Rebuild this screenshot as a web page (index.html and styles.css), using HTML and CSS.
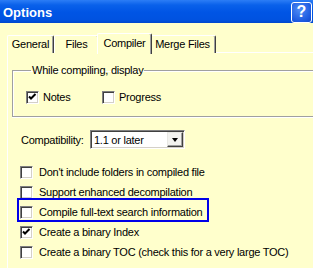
FILE: index.html
```html
<!DOCTYPE html>
<html lang="en">
<head>
    <meta charset="UTF-8">
    <title>Options</title>
    <link rel="stylesheet" href="styles.css">
</head>
<body>
    <div class="titlebar">
        <span class="title">Options</span>
        <span class="help">?</span>
    </div>
    <div class="dialog">
        <div class="tabs">
            <div class="tab tab-general">General</div>
            <div class="tab tab-files">Files</div>
            <div class="tab tab-compiler active">Compiler</div>
            <div class="tab tab-merge">Merge Files</div>
        </div>
        <div class="panel">
            <fieldset class="group">
                <legend>While compiling, display</legend>
                <div class="group-row">
                    <label class="check notes"><span class="box"><svg width="9" height="9" viewBox="0 0 9 9"><path d="M1 3.5 L3 5.5 L7.5 1" fill="none" stroke="#000" stroke-width="2"/></svg></span>Notes</label>
                    <label class="check"><span class="box"></span>Progress</label>
                </div>
            </fieldset>
            <div class="compat">
                <span class="compat-label">Compatibility:</span>
                <div class="combo">
                    <span class="combo-value">1.1 or later</span>
                    <span class="combo-btn"><span class="arrow"></span></span>
                </div>
            </div>
            <div class="options">
                <label class="check row"><span class="box"></span>Don't include folders in compiled file</label>
                <label class="check row"><span class="box"></span>Support enhanced decompilation</label>
                <label class="check row hl"><span class="box"></span>Compile full-text search information</label>
                <label class="check row"><span class="box"><svg width="9" height="9" viewBox="0 0 9 9"><path d="M1 3.5 L3 5.5 L7.5 1" fill="none" stroke="#000" stroke-width="2"/></svg></span>Create a binary Index</label>
                <label class="check row"><span class="box"></span>Create a binary TOC (check this for a very large TOC)</label>
            </div>
        </div>
    </div>
</body>
</html>
```

FILE: styles.css
```css
body {
    margin: 0;
    padding: 0;
    background-color: #ffffcc;
    font-family: "Liberation Sans", Arial, sans-serif;
    font-size: 11px;
    letter-spacing: -0.25px;
    color: #000;
    overflow: hidden;
    height: 268px;
}
.titlebar {
    height: 23px;
    display: flex;
    align-items: center;
    justify-content: space-between;
    padding: 0 1px 0 3px;
    background: linear-gradient(#2c7df6 0, #0a61ea 5px, #0055e5 12px, #0052e0 20px, #0046cc 23px);
}
.title {
    color: #fff;
    font-weight: bold;
    font-size: 13px;
    letter-spacing: 0;
    margin-top: 2px;
}
.help {
    width: 19px;
    height: 19px;
    border: 1px solid #fff;
    border-radius: 3px;
    background: radial-gradient(circle at 40% 35%, #4f8cf5, #1c5ae0 70%, #1249c8);
    color: #fff;
    font-weight: bold;
    font-size: 16px;
    letter-spacing: 0;
    display: flex;
    align-items: center;
    justify-content: center;
    margin-top: 1px;
}
.dialog {
    padding: 9px 0 0 7px;
}
.tabs {
    display: flex;
    align-items: flex-end;
    height: 21px;
    position: relative;
    z-index: 1;
}
.tab {
    height: 18px;
    box-sizing: border-box;
    line-height: 17px;
    text-align: center;
    border-top: 1px solid #fff;
    border-left: 1px solid #fff;
    border-right: 1px solid #404040;
    box-shadow: inset -1px 0 0 #a0a0a0;
    border-top-left-radius: 2px;
    border-top-right-radius: 2px;
    background-color: #ffffcc;
}
.tab-general { width: 47px; }
.tab-files { width: 45px; }
.tab-compiler { width: 55px; }
.tab-merge { width: 66px; }
.tab.active {
    height: 21px;
    line-height: 18px;
    margin: 0 -2px -1px -2px;
    position: relative;
    z-index: 2;
}
.tab-merge {
    border-left: none;
}
.panel {
    width: 306px;
    height: 216px;
    border-top: 1px solid #fff;
    border-left: 1px solid #fff;
    box-sizing: border-box;
    margin-top: -1px;
}
.group {
    margin: 11px 0 0 4px;
    padding: 13px 0 12px 13px;
    border: 1px solid #a0a0a0;
    border-right: none;
    box-shadow: inset 1px 1px 0 #fff, 0 1px 0 #fff;
}
.group legend {
    padding: 0 1px;
    margin-left: 5px;
    line-height: 13px;
}
.group-row {
    display: flex;
}
.check {
    display: flex;
    align-items: center;
    gap: 4px;
    height: 14px;
}
.check.notes {
    width: 76px;
}
.box {
    width: 13px;
    height: 13px;
    box-sizing: border-box;
    flex-shrink: 0;
    background-color: #fff;
    border: 1px solid;
    border-color: #808080 #fff #fff #808080;
    box-shadow: inset 1px 1px 0 #404040, inset -1px -1px 0 #d4d0c8;
    display: flex;
    align-items: center;
    justify-content: center;
}
.box svg {
    display: block;
}
.compat {
    display: flex;
    align-items: center;
    margin: 13px 0 0 13px;
    height: 19px;
}
.compat-label {
    width: 69px;
}
.combo {
    width: 95px;
    height: 19px;
    box-sizing: border-box;
    background-color: #fff;
    border: 1px solid;
    border-color: #808080 #fff #fff #808080;
    box-shadow: inset 1px 1px 0 #404040, inset -1px -1px 0 #d4d0c8;
    display: flex;
    align-items: center;
    justify-content: space-between;
    padding: 1px 1px 1px 3px;
}
.combo-btn {
    width: 16px;
    height: 15px;
    box-sizing: border-box;
    background-color: #f2f2ef;
    border: 1px solid;
    border-color: #e8e8e4 #404040 #404040 #e8e8e4;
    box-shadow: inset -1px -1px 0 #a0a0a0;
    display: flex;
    align-items: center;
    justify-content: center;
}
.arrow {
    width: 0;
    height: 0;
    border-left: 3.5px solid transparent;
    border-right: 3.5px solid transparent;
    border-top: 4px solid #000;
}
.options {
    margin: 13px 0 0 12px;
}
.row {
    height: 20px;
    align-items: flex-start;
    gap: 6px;
    line-height: 20px;
}
.row .box {
    margin-top: 4px;
}
.hl {
    position: relative;
}
.hl::after {
    content: "";
    position: absolute;
    left: -3px;
    top: -4px;
    width: 192px;
    height: 24px;
    border: 2px solid #0000e8;
    box-sizing: border-box;
}
```
